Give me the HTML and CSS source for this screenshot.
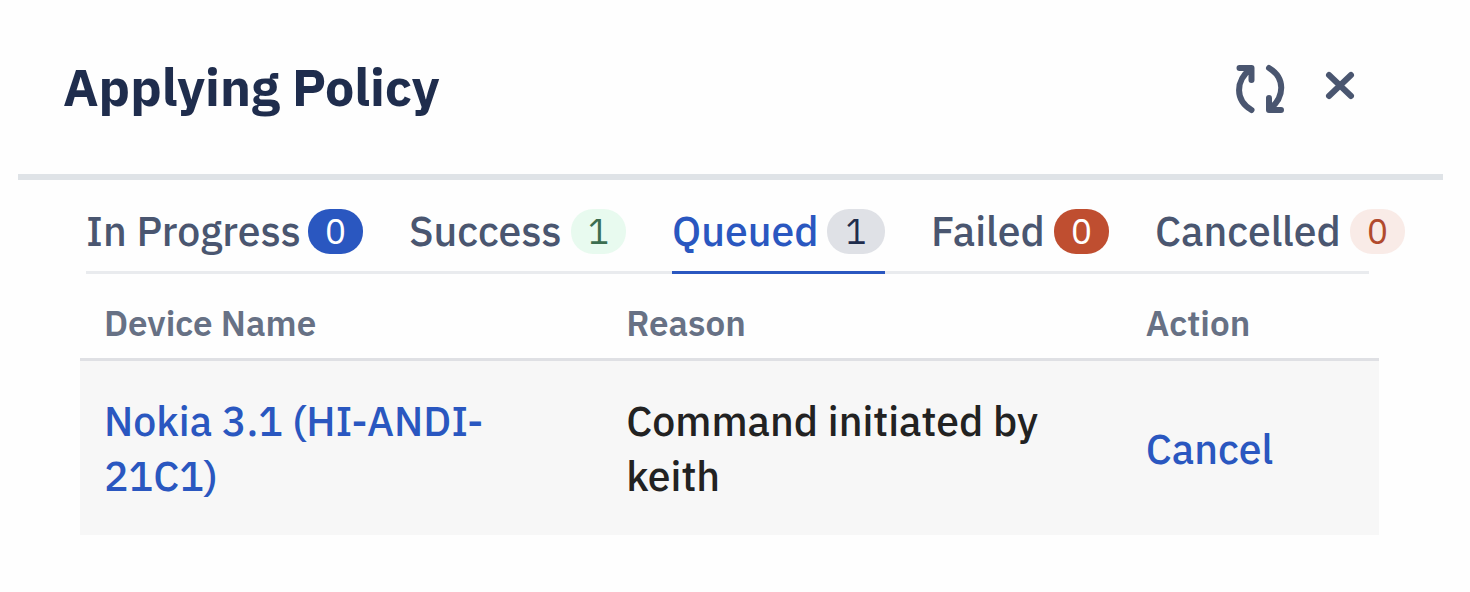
FILE: index.html
```html
<!DOCTYPE html>
<html lang="en">
<head>
<meta charset="utf-8">
<meta name="viewport" content="width=device-width, initial-scale=1">
<title>Applying Policy</title>
<link rel="stylesheet" href="styles.css">
</head>
<body>
<main class="dialog">
  <header class="dialog-header">
    <h1 class="dialog-title">Applying Policy</h1>
    <div class="dialog-actions">
      <button class="icon-button" type="button" aria-label="Refresh">
        <svg width="52" height="52" viewBox="0 0 52 52" fill="none" stroke="currentColor" stroke-width="6" stroke-linecap="round" stroke-linejoin="round" aria-hidden="true">
          <path d="M5.500 5H17.500V17M17 5.500C1 18 1 37 17.500 47"/>
          <path d="M35 5C51.500 15 51 34 35.500 46.500M35 35V47H47"/>
          <path d="M12 6H16.500V11ZM36 41V46H40Z" fill="currentColor" stroke-width="2"/>
        </svg>
      </button>
      <button class="icon-button" type="button" aria-label="Close">
        <svg width="32" height="32" viewBox="0 0 32 32" fill="none" stroke="currentColor" stroke-width="6" stroke-linecap="round" aria-hidden="true">
          <path d="M5 5L27 26M27 5L5 26"/>
        </svg>
      </button>
    </div>
  </header>
  <section class="dialog-body">
    <div class="tab-bar">
      <div class="tabs" role="tablist" aria-label="Command status">
        <button class="tab" type="button" role="tab" aria-selected="false">In Progress<span class="badge badge-progress">0</span></button>
        <button class="tab" type="button" role="tab" aria-selected="false">Success<span class="badge badge-success">1</span></button>
        <button class="tab tab-active" type="button" role="tab" aria-selected="true">Queued<span class="badge badge-queued">1</span></button>
        <button class="tab" type="button" role="tab" aria-selected="false">Failed<span class="badge badge-failed">0</span></button>
        <button class="tab" type="button" role="tab" aria-selected="false">Cancelled<span class="badge badge-cancelled">0</span></button>
      </div>
    </div>
    <table class="devices">
      <thead>
        <tr><th class="col-device" scope="col">Device Name</th><th class="col-reason" scope="col">Reason</th><th scope="col">Action</th></tr>
      </thead>
      <tbody>
        <tr>
          <td><a class="link" href="#device">Nokia 3.1 (HI-ANDI-<wbr>21C1)</a></td>
          <td>Command initiated by keith</td>
          <td><button class="link link-button" type="button">Cancel</button></td>
        </tr>
      </tbody>
    </table>
  </section>
</main>
</body>
</html>
```
FILE: styles.css
```css
* {
  box-sizing: border-box;
}

body {
  margin: 0;
  background: #fefefe;
  color: #222;
  font-family: "IBM Plex Sans", Roboto, "Liberation Sans", sans-serif;
  font-weight: 500;
}

button {
  padding: 0;
  border: 0;
  background: none;
  color: inherit;
  font: inherit;
  cursor: pointer;
}

.dialog {
  padding: 0 27px 0 18px;
}

.dialog-header {
  display: flex;
  align-items: center;
  justify-content: space-between;
  height: 180px;
  padding: 0 87px 0 45px;
  border-bottom: 6px solid #dfe3e7;
  color: #1f2d4d;
}

.dialog-title {
  margin: 0;
  font-size: 52px;
  line-height: 64px;
  font-weight: 700;
}

.dialog-actions {
  display: flex;
  align-items: center;
  gap: 38px;
  padding-top: 4px;
  color: #4a5670;
}

.icon-button {
  display: flex;
}

.icon-button:last-child {
  padding-bottom: 6px;
}

.dialog-body {
  padding: 29px 64px 0 62px;
}

.tab-bar {
  margin: 0 10px 0 6px;
  box-shadow: inset 0 -3px #e9ebee;
}

.tabs {
  display: grid;
  grid-template-columns: 277fr 217fr 213fr 178fr 250fr;
  gap: 46px;
  margin-right: -36px;
}

.tab {
  display: flex;
  align-items: flex-start;
  justify-content: space-between;
  padding-bottom: 17px;
  border-bottom: 3px solid transparent;
  color: #4a5670;
  font-size: 41px;
  line-height: 43px;
  white-space: nowrap;
}

.tab-active {
  border-color: #2a57c0;
  color: #2a57c0;
}

.badge {
  min-width: 55px;
  border-radius: 22px;
  font-size: 35px;
  line-height: 45px;
  font-weight: 400;
  text-align: center;
}

.badge-progress {
  background: #2a57c0;
  color: #fff;
}

.badge-success {
  background: #e8faef;
  color: #3c6e50;
}

.badge-queued {
  min-width: 58px;
  background: #dfe1e6;
  color: #1f2d4d;
}

.badge-failed {
  background: #bf4e30;
  color: #fff;
}

.badge-cancelled {
  background: #f9ebe7;
  color: #b14a2d;
}

.devices {
  width: 100%;
  border-collapse: collapse;
  table-layout: fixed;
  text-align: left;
}

.col-device {
  width: 40.2%;
}

.col-reason {
  width: 40%;
}

.devices th {
  padding: 27px 0 13px 24px;
  border-bottom: 3px solid #dfe0e4;
  color: #677185;
  font-size: 35px;
  line-height: 44px;
  font-weight: 600;
}

.devices td {
  padding: 32px 24px;
  background: #f7f7f7;
  font-size: 41px;
  line-height: 55px;
}

.link {
  color: #2a57c0;
  text-decoration: none;
}

.link-button {
  display: block;
}
```
